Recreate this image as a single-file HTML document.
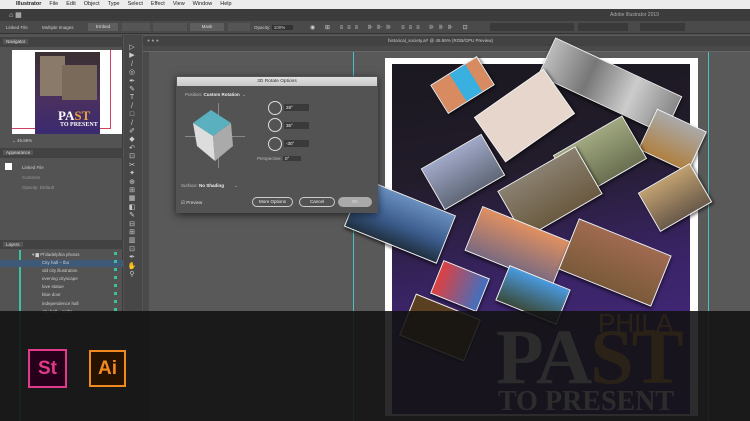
<!DOCTYPE html>
<html><head><style>
*{margin:0;padding:0;box-sizing:border-box}
body{width:750px;height:421px;overflow:hidden;background:#535353;font-family:"Liberation Sans",sans-serif;position:relative;font-size:5px;color:#ddd}
.a{position:absolute}
.ph{position:absolute;border:1.5px solid #eee;box-shadow:1px 2px 3px rgba(0,0,0,.6)}
</style></head><body>
<div class="a" style="left:0;top:0;width:750px;height:9px;background:#ececec;color:#222;font-size:5.5px;line-height:9px;padding-left:8px;white-space:nowrap">
<span style="margin-right:8px"></span><b style="margin-right:8px">Illustrator</b><span style="margin-right:8px">File</span><span style="margin-right:8px">Edit</span><span style="margin-right:8px">Object</span><span style="margin-right:8px">Type</span><span style="margin-right:8px">Select</span><span style="margin-right:8px">Effect</span><span style="margin-right:8px">View</span><span style="margin-right:8px">Window</span><span>Help</span></div>
<div class="a" style="left:0;top:9px;width:750px;height:12px;background:#3c3c3c"><span class="a" style="left:610px;top:3px;color:#aaa;font-size:5px">Adobe Illustrator 2019</span><span class="a" style="left:9px;top:2px;color:#ddd;font-size:7px">⌂ ▦</span></div>
<div class="a" style="left:0;top:21px;width:750px;height:13px;background:#4a4a4a;border-bottom:1px solid #333"></div>
<div class="a" style="left:6px;top:25px;font-size:4.5px;color:#ccc;white-space:nowrap">Linked File</div>
<div class="a" style="left:42px;top:25px;font-size:4.5px;color:#ccc">Multiple Images</div>
<div class="a" style="left:88px;top:23px;width:30px;height:8px;background:#5e5e5e;font-size:4.5px;text-align:center;line-height:8px">Embed</div>
<div class="a" style="left:122px;top:23px;width:28px;height:8px;background:#555"></div>
<div class="a" style="left:153px;top:23px;width:34px;height:8px;background:#555"></div>
<div class="a" style="left:190px;top:23px;width:34px;height:8px;background:#5e5e5e;font-size:4.5px;text-align:center;line-height:8px">Mask</div>
<div class="a" style="left:228px;top:23px;width:22px;height:8px;background:#555"></div>
<div class="a" style="left:254px;top:25px;font-size:4.5px;color:#ccc">Opacity: <span style="background:#333;padding:0 8px 0 2px">100%</span></div>
<div class="a" style="left:310px;top:24px;width:440px;height:7px;font-size:6px;color:#ccc;letter-spacing:4px;white-space:nowrap">◉ ⊞ ≡≡≡ ⊪⊪⊪ ≡≡≡ ⊪⊪⊪ ⊡</div>
<div class="a" style="left:490px;top:23px;width:48px;height:8px;background:#3a3a3a"></div>
<div class="a" style="left:530px;top:23px;width:44px;height:8px;background:#3a3a3a"></div>
<div class="a" style="left:578px;top:23px;width:50px;height:8px;background:#3a3a3a"></div>
<div class="a" style="left:640px;top:23px;width:45px;height:8px;background:#3a3a3a"></div>
<div class="a" style="left:0;top:35px;width:123px;height:386px;background:#535353;border-right:1px solid #3a3a3a"></div>
<div class="a" style="left:0;top:37px;width:123px;height:10px;background:#424242"><span class="a" style="left:3px;top:2px;font-size:4.5px;background:#555;padding:0 3px">Navigator</span></div>
<div class="a" style="left:12px;top:50px;width:110px;height:84px;background:#fff"></div>
<div class="a" style="left:110px;top:50px;width:1px;height:78px;background:#d04060"></div>
<div class="a" style="left:12px;top:128px;width:99px;height:1px;background:#d04060"></div>
<div class="a" style="left:35px;top:52px;width:65px;height:82px;background:linear-gradient(#3a3030,#4a3060 60%,#3a2a70)"></div>
<div class="a" style="left:40px;top:56px;width:25px;height:40px;background:#8a7a6a"></div>
<div class="a" style="left:62px;top:65px;width:35px;height:35px;background:#7a6a5a"></div>
<div class="a" style="left:58px;top:108px;font:bold 13px 'Liberation Serif',serif;color:#fff">PA<span style="color:#e8a040">ST</span></div>
<div class="a" style="left:60px;top:122px;font:bold 6px 'Liberation Serif',serif;color:#fff">TO PRESENT</div>
<div class="a" style="left:12px;top:138px;font-size:4.5px;color:#ccc">⌄ 45.86%</div>
<div class="a" style="left:0;top:148px;width:123px;height:10px;background:#424242"><span class="a" style="left:3px;top:2px;font-size:4.5px;background:#555;padding:0 3px">Appearance</span></div>
<div class="a" style="left:5px;top:163px;width:7px;height:7px;background:#fff"></div>
<div class="a" style="left:22px;top:165px;font-size:4.5px;color:#ccc">Linked File</div>
<div class="a" style="left:22px;top:175px;font-size:4.5px;color:#999">Contents</div>
<div class="a" style="left:22px;top:185px;font-size:4.5px;color:#999">Opacity: Default</div>
<div class="a" style="left:0;top:240px;width:123px;height:9px;background:#424242"><span class="a" style="left:3px;top:2px;font-size:4.5px;background:#555;padding:0 3px">Layers</span></div>
<div class="a" style="left:19px;top:250px;width:2px;height:171px;background:#3cc0a0"></div>
<div class="a" style="left:0;top:260px;width:123px;height:7px;background:#3e5a78"></div>
<div class="a" style="left:32px;top:251px;font-size:4.5px;line-height:8.1px;color:#ccc;white-space:nowrap">▾ ▆ Philadelphia photos<br>&nbsp;&nbsp;&nbsp;&nbsp;&nbsp;&nbsp;&nbsp;&nbsp;City hall – tbo<br>&nbsp;&nbsp;&nbsp;&nbsp;&nbsp;&nbsp;&nbsp;&nbsp;old city illustration<br>&nbsp;&nbsp;&nbsp;&nbsp;&nbsp;&nbsp;&nbsp;&nbsp;evening cityscape<br>&nbsp;&nbsp;&nbsp;&nbsp;&nbsp;&nbsp;&nbsp;&nbsp;love statue<br>&nbsp;&nbsp;&nbsp;&nbsp;&nbsp;&nbsp;&nbsp;&nbsp;blue door<br>&nbsp;&nbsp;&nbsp;&nbsp;&nbsp;&nbsp;&nbsp;&nbsp;independence hall<br>&nbsp;&nbsp;&nbsp;&nbsp;&nbsp;&nbsp;&nbsp;&nbsp;city hall – night</div>
<div class="a" style="left:114px;top:252px;width:3px;height:60px;background:repeating-linear-gradient(#3cc0a0 0 3px,transparent 3px 8px)"></div>
<div class="a" style="left:124px;top:35px;width:18px;height:386px;background:#474747"></div>
<div class="a" style="left:127px;top:44px;width:10px;font-size:7px;line-height:8.4px;color:#ccc;text-align:center">▷<br>▶<br>/<br>◎<br>✒<br>✎<br>T<br>/<br>□<br>/<br>✐<br>◆<br>↶<br>⊡<br>✂<br>✦<br>⊕<br>⊞<br>▦<br>◧<br>✎<br>⊟<br>⊞<br>▥<br>⊡<br>✒<br>✋<br>⚲</div>
<div class="a" style="left:143px;top:35px;width:607px;height:386px;background:#595959"></div>
<div class="a" style="left:143px;top:36px;width:607px;height:10px;background:#424242"><span class="a" style="left:4px;top:2px;font-size:5px;color:#999">● ● ●</span><span class="a" style="left:245px;top:2px;font-size:4.5px;color:#ccc">historical_society.ai* @ 45.86% (RGB/GPU Preview)</span></div>
<div class="a" style="left:143px;top:46px;width:607px;height:6px;background:#4a4a4a;border-bottom:1px solid #666"></div>
<div class="a" style="left:143px;top:52px;width:6px;height:369px;background:#4a4a4a"></div>
<div class="a" style="left:353px;top:52px;width:1px;height:369px;background:#4fc0c0"></div>
<div class="a" style="left:708px;top:52px;width:1px;height:369px;background:#4fc0c0"></div>
<div class="a" style="left:385px;top:58px;width:313px;height:358px;background:#fff"></div>
<div class="a" style="left:392px;top:64px;width:298px;height:350px;background:linear-gradient(170deg,#1a1820 0%,#221c2a 30%,#3a2466 60%,#4a2a8a 100%)"></div>
<div class="ph" style="left:540px;top:65px;width:140px;height:42px;background:linear-gradient(90deg,#bbb,#777,#ccc,#888);transform:rotate(25deg)"></div>
<div class="ph" style="left:435px;top:68px;width:55px;height:34px;background:linear-gradient(90deg,#d88a60 40%,#3ab0e0 40%,#3ab0e0 75%,#d88a60 75%);transform:rotate(-32deg)"></div>
<div class="ph" style="left:482px;top:88px;width:85px;height:55px;background:#e6d6cc;transform:rotate(-35deg)"></div>
<div class="ph" style="left:645px;top:118px;width:55px;height:45px;background:linear-gradient(#aaa,#b08040);transform:rotate(25deg)"></div>
<div class="ph" style="left:428px;top:148px;width:70px;height:48px;background:linear-gradient(#a0a8c8,#606878);transform:rotate(-30deg)"></div>
<div class="ph" style="left:560px;top:132px;width:80px;height:50px;background:linear-gradient(#a0a880,#6a7050);transform:rotate(-30deg)"></div>
<div class="ph" style="left:505px;top:165px;width:90px;height:55px;background:linear-gradient(#8a8070,#6a5a40);transform:rotate(-30deg)"></div>
<div class="ph" style="left:645px;top:175px;width:60px;height:45px;background:linear-gradient(#c0a070,#6a5a4a);transform:rotate(-30deg)"></div>
<div class="ph" style="left:350px;top:195px;width:100px;height:52px;background:linear-gradient(#6a90c0,#3a5a8a 60%,#203040);transform:rotate(22deg)"></div>
<div class="ph" style="left:470px;top:222px;width:95px;height:48px;background:linear-gradient(#e09060,#7a6a80);transform:rotate(22deg)"></div>
<div class="ph" style="left:565px;top:235px;width:100px;height:55px;background:linear-gradient(#a06a50,#7a5a3a);transform:rotate(22deg)"></div>
<div class="ph" style="left:435px;top:268px;width:50px;height:36px;background:linear-gradient(90deg,#e04040,#4070c0);transform:rotate(22deg)"></div>
<div class="ph" style="left:500px;top:276px;width:66px;height:38px;background:linear-gradient(#4a9ae0,#3a4a3a);transform:rotate(22deg)"></div>
<div class="ph" style="left:405px;top:305px;width:70px;height:45px;background:#5a4020;transform:rotate(22deg)"></div>
<div class="a" style="left:598px;top:308px;font-size:26px;color:#e8a040">PHILA</div>
<div class="a" style="left:496px;top:318px;font:bold 78px/1 'Liberation Serif',serif;color:#fff;letter-spacing:-2px">PA<span style="color:#e8a040">ST</span></div>
<div class="a" style="left:498px;top:388px;font:bold 28px/1 'Liberation Serif',serif;color:#fff">TO PRESENT</div>
<div class="a" style="left:176px;top:76px;width:202px;height:137px;background:#535353;box-shadow:0 2px 8px rgba(0,0,0,.6)"></div>
<div class="a" style="left:177px;top:77px;width:200px;height:9px;background:linear-gradient(#e0e0e0,#c8c8c8);color:#333;font-size:4.8px;text-align:center;line-height:9px">3D Rotate Options</div>
<div class="a" style="left:185px;top:92px;font-size:4.5px;color:#bbb">Position: <b style="color:#eee">Custom Rotation</b> &nbsp;⌄</div>
<div class="a" style="left:185px;top:136px;width:60px;height:1px;background:#888"></div>
<div class="a" style="left:218px;top:103px;width:1px;height:65px;background:#888"></div>
<svg class="a" style="left:190px;top:105px" width="60" height="60"><polygon points="3,18 21,5 41,18 23,31" fill="#5bb0c0"/><polygon points="3,18 23,31 25,56 7,41" fill="#ddd"/><polygon points="23,31 41,18 43,41 25,56" fill="#aaa"/></svg>
<div class="a" style="left:268px;top:101px;width:14px;height:14px;border:1.5px solid #ddd;border-radius:50%"></div>
<div class="a" style="left:268px;top:118px;width:14px;height:14px;border:1.5px solid #ddd;border-radius:50%"></div>
<div class="a" style="left:268px;top:137px;width:14px;height:14px;border:1.5px solid #ddd;border-radius:50%"></div>
<div class="a" style="left:284px;top:104px;width:25px;height:7px;background:#3a3a3a;font-size:4.5px;color:#eee;padding-left:2px;line-height:7px">28°</div>
<div class="a" style="left:284px;top:122px;width:25px;height:7px;background:#3a3a3a;font-size:4.5px;color:#eee;padding-left:2px;line-height:7px">36°</div>
<div class="a" style="left:284px;top:140px;width:25px;height:7px;background:#3a3a3a;font-size:4.5px;color:#eee;padding-left:2px;line-height:7px">-30°</div>
<div class="a" style="left:257px;top:156px;font-size:4.5px;color:#bbb">Perspective: <span style="background:#3a3a3a;color:#eee;padding:0 12px 0 2px">0°</span></div>
<div class="a" style="left:181px;top:183px;font-size:4.5px;color:#bbb">Surface: <b style="color:#eee">No Shading</b> &nbsp;&nbsp;&nbsp;&nbsp;&nbsp;&nbsp;&nbsp;⌄</div>
<div class="a" style="left:181px;top:200px;font-size:4.5px;color:#ddd">☑ Preview</div>
<div class="a" style="left:252px;top:197px;width:41px;height:10px;border:1px solid #ccc;border-radius:5px;font-size:4.5px;text-align:center;line-height:8px;color:#eee">More Options</div>
<div class="a" style="left:299px;top:197px;width:36px;height:10px;border:1px solid #ccc;border-radius:5px;font-size:4.5px;text-align:center;line-height:8px;color:#eee">Cancel</div>
<div class="a" style="left:338px;top:197px;width:34px;height:10px;background:#aaa;border-radius:5px;font-size:4.5px;text-align:center;line-height:10px;color:#ddd">OK</div>
<div class="a" style="left:0;top:311px;width:750px;height:110px;background:rgba(18,18,18,.89)"></div>
<div class="a" style="left:28px;top:349px;width:39px;height:39px;border:2px solid #e03a8a;background:#26001a;color:#e03a8a;font:bold 19px/35px 'Liberation Sans',sans-serif;text-align:center">St</div>
<div class="a" style="left:89px;top:350px;width:37px;height:37px;border:2px solid #f08a20;background:#261200;color:#f08a20;font:bold 19px/33px 'Liberation Sans',sans-serif;text-align:center">Ai</div>
</body></html>
